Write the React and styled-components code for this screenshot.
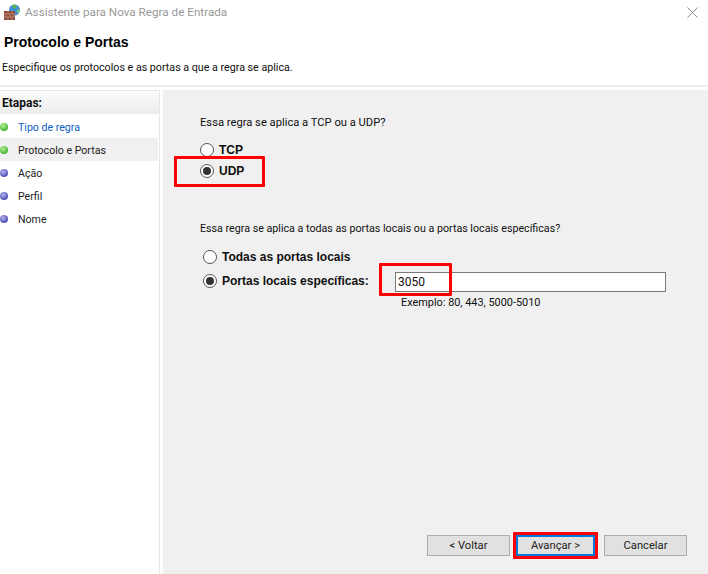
import styled, { createGlobalStyle } from 'styled-components';

const GlobalStyle = createGlobalStyle`
    html, body {
        margin: 0;
        padding: 0;
        background: #fff;
    }
    * {
        box-sizing: border-box;
    }
`

const Wrapper = styled.div`
    width: 708px;
    height: 574px;
    overflow: hidden;
    display: flex;
    flex-direction: column;
    background: #fff;
    color: #111;
    font-family: Roboto, "Liberation Sans", sans-serif;
    font-size: 11.2px;
`

const TitleBar = styled.div`
    height: 28px;
    flex: none;
    display: flex;
    align-items: center;
    justify-content: space-between;
    padding: 0 10px 4px 4px;
`

const TitleLeft = styled.div`
    display: flex;
    align-items: center;
    gap: 5px;
`

const TitleText = styled.span`
    color: #999;
    font-size: 11.7px;
`

const Header = styled.div`
    height: 59px;
    flex: none;
    border-bottom: 2px solid #ececec;
    padding-left: 2px;
`

const Heading = styled.h1`
    margin: 5px 0 0 2px;
    font-family: "Liberation Sans", sans-serif;
    font-size: 14px;
    line-height: 18px;
    font-weight: 700;
    color: #000;
`

const SubHeading = styled.p`
    margin: 9px 0 0;
    line-height: 16px;
    font-size: 10.7px;
`

const Body = styled.div`
    flex: 1;
    display: flex;
    gap: 3px;
    padding-top: 3px;
    min-height: 0;
`

const Sidebar = styled.aside`
    width: 160px;
    flex: none;
    border-right: 1px solid #e6e6e6;
    border-top: 1px solid #e6e6e6;
`

const SidebarTitle = styled.div`
    height: 23px;
    padding-left: 2px;
    display: flex;
    align-items: center;
    font-weight: 700;
    font-size: 12px;
    background: linear-gradient(#fbfbfb, #ececec);
`

const Steps = styled.ul`
    list-style: none;
    margin: 1px 0 0;
    padding: 0;
`

const Step = styled.li`
    height: 23px;
    padding-top: 1px;
    display: flex;
    align-items: center;
    gap: 10px;
    margin-right: 1px;
    font-size: 10.6px;
    color: ${props => props.$link ? '#0a5fc4' : '#222'};
    background: ${props => props.$active ? '#f0f0f0' : 'transparent'};
`

const Dot = styled.span`
    width: 8px;
    height: 8px;
    flex: none;
    border-radius: 50%;
    background: ${props => props.$done
        ? 'radial-gradient(circle at 40% 35%, #b6f09a, #46b52f 70%)'
        : 'radial-gradient(circle at 40% 35%, #b5b5f0, #5050b8 70%)'};
`

const Content = styled.main`
    flex: 1;
    display: flex;
    flex-direction: column;
    background: #f0f0f0;
    padding: 25px 21px 18px 37px;
`

const Question = styled.p`
    margin: 0;
    line-height: 16px;
`

const RadioGroup = styled.div`
    display: flex;
    flex-direction: column;
    gap: ${props => props.$gap}px;
    margin: ${props => props.$top}px 0 0 ${props => props.$left}px;
`

const RadioRow = styled.label`
    position: relative;
    display: flex;
    align-items: center;
    gap: 5px;
    height: 16px;
    font-family: "Liberation Sans", sans-serif;
    font-weight: 700;
    font-size: 12px;
`

const Radio = styled.span`
    width: 14px;
    height: 14px;
    flex: none;
    border-radius: 50%;
    border: 1px solid #555;
    background: #fff;
    display: flex;
    align-items: center;
    justify-content: center;

    &::after {
        content: '';
        width: 8px;
        height: 8px;
        border-radius: 50%;
        background: ${props => props.$checked ? '#333' : 'transparent'};
    }
`

const SecondQuestion = styled(Question)`
    margin-top: 42px;
    font-size: 10.7px;
`

const PortInput = styled.div`
    position: absolute;
    left: 192px;
    top: -1px;
    width: 271px;
    height: 20px;
    padding-left: 2px;
    border: 1px solid #7a7a7a;
    background: #fff;
    display: flex;
    align-items: center;
    font-family: Roboto, sans-serif;
    font-weight: 400;
    font-size: 12px;
`

const Hint = styled.div`
    margin: 6px 0 0 201px;
    line-height: 16px;
    font-size: 10.9px;
`

const Highlight = styled.span`
    position: absolute;
    top: ${props => props.$top}px;
    left: ${props => props.$left}px;
    width: ${props => props.$width}px;
    height: ${props => props.$height}px;
    border: 3px solid #f00;
    border-radius: 1px;
    pointer-events: none;
`

const Footer = styled.div`
    margin-top: auto;
    display: flex;
    justify-content: flex-end;
    gap: 6px;
`

const Button = styled.div`
    position: relative;
    width: ${props => props.$primary ? 79 : 83}px;
    height: 21px;
    margin-right: ${props => props.$primary ? 3 : 0}px;
    display: flex;
    align-items: center;
    justify-content: center;
    background: #e1e1e1;
    border: ${props => props.$primary ? '2px solid #0078d7' : '1px solid #adadad'};
    color: #222;
`

const CloseIcon = () => (
    <svg width="11" height="11" viewBox="0 0 11 11">
        <path d="M0.5 0.5 L10.5 10.5 M10.5 0.5 L0.5 10.5" stroke="#888" strokeWidth="1" fill="none" />
    </svg>
)

const WizardIcon = () => (
    <svg width="16" height="16" viewBox="0 0 16 16">
        <circle cx="10.5" cy="6" r="5.5" fill="#3d8fd8" />
        <path d="M8 1.5 Q10.5 -0.5 13 1.5 L12 4.5 L9 4 Z" fill="#5cb05c" />
        <path d="M13 6 L16 5 L15 9 L13 9 Z" fill="#7cc46c" />
        <rect x="0" y="7" width="11" height="9" fill="#8e4a36" />
        <path d="M0 10 H11 M0 13 H11 M4 7 V10 M8 7 V10 M2 10 V13 M6 10 V13 M10 10 V13 M4 13 V16 M8 13 V16" stroke="#c99a86" strokeWidth="0.7" fill="none" />
    </svg>
)

const StepItems = [
    { name: 'Tipo de regra', done: true, link: true },
    { name: 'Protocolo e Portas', done: true, active: true },
    { name: 'Ação' },
    { name: 'Perfil' },
    { name: 'Nome' }
]

export default function App() {
    return (
        <Wrapper>
            <GlobalStyle />
            <TitleBar>
                <TitleLeft>
                    <WizardIcon />
                    <TitleText>Assistente para Nova Regra de Entrada</TitleText>
                </TitleLeft>
                <CloseIcon />
            </TitleBar>

            <Header>
                <Heading>Protocolo e Portas</Heading>
                <SubHeading>Especifique os protocolos e as portas a que a regra se aplica.</SubHeading>
            </Header>

            <Body>
                <Sidebar>
                    <SidebarTitle>Etapas:</SidebarTitle>
                    <Steps>
                        {
                            StepItems.map(item => (
                                <Step key={item.name} $link={item.link} $active={item.active}>
                                    <Dot $done={item.done} />
                                    {item.name}
                                </Step>
                            ))
                        }
                    </Steps>
                </Sidebar>

                <Content>
                    <Question>Essa regra se aplica a TCP ou a UDP?</Question>
                    <RadioGroup $top={11} $gap={5} $left={0}>
                        <RadioRow><Radio />TCP</RadioRow>
                        <RadioRow>
                            <Radio $checked />UDP
                            <Highlight $top={-7} $left={-26} $width={91} $height={31} />
                        </RadioRow>
                    </RadioGroup>

                    <SecondQuestion>Essa regra se aplica a todas as portas locais ou a portas locais específicas?</SecondQuestion>
                    <RadioGroup $top={12} $gap={8} $left={3}>
                        <RadioRow><Radio />Todas as portas locais</RadioRow>
                        <RadioRow>
                            <Radio $checked />Portas locais específicas:
                            <PortInput>
                                3050
                                <Highlight $top={-10} $left={-17} $width={73} $height={33} />
                            </PortInput>
                        </RadioRow>
                    </RadioGroup>
                    <Hint>Exemplo: 80, 443, 5000-5010</Hint>

                    <Footer>
                        <Button>&lt; Voltar</Button>
                        <Button $primary>
                            Avançar &gt;
                            <Highlight $top={-5} $left={-5} $width={85} $height={27} />
                        </Button>
                        <Button>Cancelar</Button>
                    </Footer>
                </Content>
            </Body>
        </Wrapper>
    )
}
